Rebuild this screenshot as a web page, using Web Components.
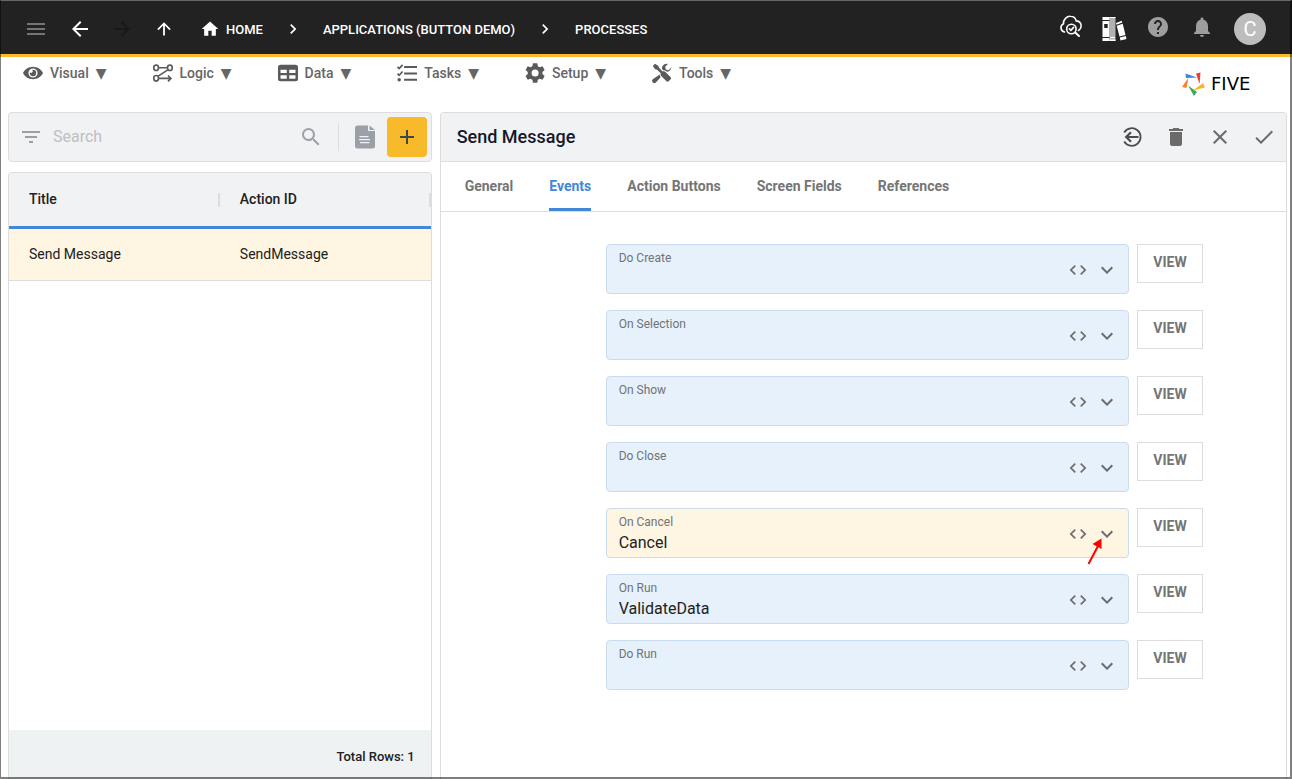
<!DOCTYPE html>
<html lang="en">
<head>
<meta charset="utf-8">
<meta name="viewport" content="width=device-width, initial-scale=1">
<title>Five - Processes</title>
<style>
  html, body { height: 100%; margin: 0; }
  body { font-family: Roboto, "Liberation Sans", sans-serif; background: #fff; color: #212121; overflow: hidden; }
</style>
</head>
<body>
<five-app>
  <top-bar slot="top">
    <nav-crumb icon="home">HOME</nav-crumb>
    <nav-crumb>APPLICATIONS (BUTTON DEMO)</nav-crumb>
    <nav-crumb last>PROCESSES</nav-crumb>
  </top-bar>
  <menu-bar slot="menu">
    <menu-entry icon="eye">Visual</menu-entry>
    <menu-entry icon="logic">Logic</menu-entry>
    <menu-entry icon="grid">Data</menu-entry>
    <menu-entry icon="tasks">Tasks</menu-entry>
    <menu-entry icon="gear">Setup</menu-entry>
    <menu-entry icon="tools">Tools</menu-entry>
  </menu-bar>
  <record-list slot="list"></record-list>
  <record-form slot="form" heading="Send Message">
    <form-tab slot="tabs">General</form-tab>
    <form-tab slot="tabs" selected>Events</form-tab>
    <form-tab slot="tabs">Action Buttons</form-tab>
    <form-tab slot="tabs">Screen Fields</form-tab>
    <form-tab slot="tabs">References</form-tab>
    <event-field label="Do Create"></event-field>
    <event-field label="On Selection"></event-field>
    <event-field label="On Show"></event-field>
    <event-field label="Do Close"></event-field>
    <event-field label="On Cancel" value="Cancel" active><pointer-arrow></pointer-arrow></event-field>
    <event-field label="On Run" value="ValidateData"></event-field>
    <event-field label="Do Run"></event-field>
  </record-form>
</five-app>

<script>
const ICONS = {
  menu: '<path d="M3 18h18v-2H3v2zm0-5h18v-2H3v2zm0-7v2h18V6H3z"/>',
  back: '<path d="M20 11H7.83l5.59-5.59L12 4l-8 8 8 8 1.41-1.41L7.83 13H20v-2z"/>',
  forward: '<path d="M12 4l-1.41 1.41L16.17 11H4v2h12.17l-5.58 5.59L12 20l8-8z"/>',
  up: '<path d="M5.3 12l1.2 1.2 4.6-4.6V18.5h1.8V8.600l4.600 4.600 1.200-1.200L12 5.300z"/>',
  home: '<path d="M10 20v-6h4v6h5v-8h3L12 3 2 12h3v8z"/>',
  right: '<path d="M10 6L8.590 7.410 13.170 12l-4.580 4.590L10 18l6-6z"/>',
  eye: '<path fill-rule="evenodd" d="M12 4.500C6.500 4.500 2 7.900 0 12c2 4.100 6.500 7.500 12 7.500s10-3.400 12-7.500c-2-4.100-6.500-7.500-12-7.500zm0 13a5.500 5.500 0 1 1 0-11 5.500 5.500 0 0 1 0 11z"/><path d="M12 8.200a3.800 3.800 0 1 1-3.700 3 2 2 0 0 0 2.800-2.900z"/>',
  logic: '<g fill="none" stroke="currentColor" stroke-width="2"><rect x="1" y="2.500" width="5.500" height="6.500" rx="2.700"/><rect x="17.500" y="2.500" width="5.500" height="6.500" rx="2.700"/><rect x="1" y="15" width="5.500" height="6.500" rx="2.700"/><path d="M6.500 5.700h11M18.300 8L5.700 16M6.500 18.500h15M18 15l3.500 3.500L18 22"/></g>',
  grid: '<path fill-rule="evenodd" d="M3 2h18a3 3 0 0 1 3 3v14a3 3 0 0 1-3 3H3a3 3 0 0 1-3-3V5a3 3 0 0 1 3-3zm0 6v4h7.500V8zm10.500 0v4H21V8zM3 14.700V19h7.500v-4.300zm10.500 0V19H21v-4.300z"/>',
  tasks: '<path d="M8.500 3.500H24v2.400H8.500zM8.500 11.500H24v2.400H8.500zM8.500 19H24v2.400H8.500z"/><circle cx="2.600" cy="20" r="2.100"/><path fill="none" stroke="currentColor" stroke-width="2" d="M.6 4.700l2 2L6.700 2.200M.6 12.700l2 2 4.100-4.500"/>',
  gear: '<path fill-rule="evenodd" d="M9.600 0h4.800l.7 3.300 2.100 1.200 3.200-1.100 2.400 4.200-2.500 2.200v2.400l2.500 2.200-2.400 4.200-3.200-1.100-2.100 1.200-.7 3.300H9.600l-.7-3.300-2.100-1.200-3.200 1.100-2.400-4.200 2.500-2.200V9.800L1.200 7.600l2.400-4.200 3.200 1.100 2.100-1.200zM12 7a4 4 0 1 0 0 8 4 4 0 0 0 0-8z" transform="translate(-.6 .4) scale(1.060)"/>',
  tools: '<path d="M3.500 1L1 3.500l2.800 4 2.400.5 4.300 4.300c-.5 1.200-.2 2.500.6 3.400l6.300 6.300c.7.700 1.800.7 2.500 0l2.500-2.500c.7-.7.700-1.800 0-2.500L16.100 10.700c-.9-.9-2.300-1.100-3.400-.6L8.400 5.800 7.800 3.600z"/><path d="M23.300 5.200l-3.400 3.400-3.300-.8-.8-3.300L19.200 1.100c-2.400-.6-4.900.2-6.300 2.200-.8 1.200-1.100 2.500-.9 3.800l1.500 1.500c1.300-.2 2.600.2 3.600 1.200l.8.8c1.200-.1 2.500-.6 3.500-1.600 1.500-1.500 2-3.700 1.900-3.800zM9.300 13.700L.9 19.600a2.600 2.600 0 0 0 3.700 3.700l5.800-6.200c-.8-.9-1.200-2.200-1.100-3.400z"/>',
  cloud: '<g fill="none" stroke="currentColor" stroke-width="1.600" stroke-linecap="round" transform="translate(1 -.5)"><path d="M5.500 17.500A4.400 4.400 0 0 1 4.500 9.200 C4 5 8 1.500 11.500 1.800c3 .1 5 2 5.800 4.600 3.600.1 5.200 3 4.800 5.600-.3 2.200-1.300 3.200-2.600 4"/><circle cx="12.400" cy="14.500" r="4.700"/><path stroke-width="2" d="M16.200 18l3.800 3.500"/><path d="M10.300 14.300l1.600 1.600 2.700-3"/></g>',
  books: '<g transform="translate(.5 2)"><path fill-rule="evenodd" d="M0 0h7v24H0zM1.700 7v4h3.500V7zM0 3v1h7V3zM0 20v1h7v-1z"/><path opacity=".65" d="M7 0h6v24H7z"/><path d="M7.500 20h5v1h-5zM7 22.500h6V24H7zM7 0h6v1H7zM13.500 6l5.700-2.200.6 1.700-5.900 2.200zM14.200 8.700l6-2 2.800 11.200-6 1.500zM17.300 20.500l6-1.500.7 2.900-6 1.500z"/></g>',
  help: '<path d="M12 2C6.480 2 2 6.480 2 12s4.480 10 10 10 10-4.480 10-10S17.520 2 12 2zm1 17h-2v-2h2v2zm2.070-7.750l-.9.920C13.450 12.900 13 13.500 13 15h-2v-.5c0-1.100.45-2.100 1.170-2.830l1.240-1.260c.37-.36.590-.860.590-1.410 0-1.100-.9-2-2-2s-2 .9-2 2H8c0-2.210 1.790-4 4-4s4 1.790 4 4c0 .880-.360 1.680-.930 2.250z"/>',
  bell: '<path d="M12 22c1.100 0 2-.9 2-2h-4c0 1.100.9 2 2 2zm6-6v-5c0-3.070-1.640-5.640-4.500-6.320V4c0-.830-.670-1.500-1.500-1.500s-1.500.67-1.500 1.500v.68C7.630 5.360 6 7.920 6 11v5l-2 2v1h16v-1l-2-2z"/>',
  filter: '<path d="M10 18h4v-2h-4v2zM3 6v2h18V6H3zm3 7h12v-2H6v2z"/>',
  search: '<path d="M15.500 14h-.79l-.28-.27A6.471 6.471 0 0 0 16 9.500 6.500 6.500 0 1 0 9.500 16c1.610 0 3.090-.59 4.230-1.570l.27.28v.79l5 4.990L20.490 19l-4.990-5zm-6 0C7.010 14 5 11.990 5 9.500S7.010 5 9.500 5 14 7.010 14 9.500 11.990 14 9.500 14z"/>',
  doc: '<path fill-rule="evenodd" d="M4.500 .5H15V6h7v15a2.500 2.500 0 0 1-2.500 2.500h-15A2.500 2.500 0 0 1 2 21V3A2.500 2.500 0 0 1 4.500 .5zM6.500 11v1.200h9V11zm-.5 3v1.200h11V14zm1 3v1.200h9.500V17z"/><path d="M16.500.5L22 5h-5.500z"/>',
  plus: '<path d="M19 13h-6v6h-2v-6H5v-2h6V5h2v6h6v2z"/>',
  exit: '<g fill="none" stroke="currentColor" stroke-width="1.800"><path d="M4.200 7.500a8.800 8.800 0 1 1 0 9"/><path stroke-width="2.200" d="M18.500 12H6.500M11 7.300L6.200 12l4.800 4.700"/></g>',
  trash: '<path d="M6 19c0 1.100.9 2 2 2h8c1.100 0 2-.9 2-2V7H6v12zM19 4h-3.500l-1-1h-5l-1 1H5v2h14V4z"/>',
  close: '<path d="M19 6.410L17.590 5 12 10.590 6.410 5 5 6.410 10.590 12 5 17.590 6.410 19 12 13.410 17.590 19 19 17.590 13.410 12z"/>',
  check: '<path d="M9 16.170L4.830 12l-1.420 1.410L9 19 21 7l-1.410-1.410z"/>',
  code: '<path d="M9.400 16.600L4.800 12l4.600-4.600L8 6l-6 6 6 6 1.400-1.400zm5.200 0l4.600-4.600-4.600-4.600L16 6l6 6-6 6-1.400-1.400z"/>',
  down: '<path d="M16.590 8.590L12 13.170 7.410 8.590 6 10l6 6 6-6z"/>'
};

/* Shared by every element that holds clickable icons */
const RESET = `
  * { box-sizing: border-box; }
  button { font: inherit; color: inherit; background: none; border: 0; padding: 0; margin: 0; cursor: pointer; display: flex; align-items: center; justify-content: center; }
  a { color: inherit; text-decoration: none; }
`;

function define(name, render) {
  customElements.define(name, class extends HTMLElement {
    connectedCallback() {
      if (this.shadowRoot) return;
      this.attachShadow({ mode: 'open' }).innerHTML = render(this);
    }
  });
}

define('five-icon', el => `
  <style>
    :host { display: block; flex: none; width: var(--size, 24px); height: var(--size, 24px); }
    svg { display: block; width: 100%; height: 100%; overflow: visible; }
  </style>
  <svg viewBox="0 0 24 24" fill="currentColor" aria-hidden="true">${ICONS[el.getAttribute('name')]}</svg>`);

define('five-app', () => `
  <style>
    :host { box-sizing: border-box; display: flex; flex-direction: column; height: 100vh; }
    main { flex: 1; min-height: 0; display: grid; grid-template-columns: 1fr 2fr; gap: 8px; padding: 0 5px 0 8px; }
    .frame { position: fixed; inset: 0; pointer-events: none; border: solid rgba(0,0,0,.5); border-width: 1px 2px 2px 1px; border-top-color: #666; }
  </style>
  <slot name="top"></slot>
  <slot name="menu"></slot>
  <main><slot name="list"></slot><slot name="form"></slot></main>
  <div class="frame"></div>`);

define('top-bar', () => `
  <style>${RESET}
    :host { box-sizing: border-box; flex: none; display: flex; align-items: center; height: 57px; padding: 4px 26px 0 24px; background: #222; color: #fff; border-bottom: 3px solid #f8b92a; }
    .nav { display: flex; align-items: center; gap: 18px; }
    .nav button:first-child { color: #757575; margin-right: 2px; }
    .nav button:nth-child(3) { color: #181818; }
    .crumbs { display: flex; align-items: center; margin-left: 24px; }
    .tools { margin-left: auto; display: flex; align-items: center; gap: 20px; padding-bottom: 4px; color: #9e9e9e; }
    .tools .white { color: #fff; }
    .avatar { width: 32px; height: 32px; margin-left: 20px; border-radius: 50%; background: #bdbdbd; color: #fff; font-size: 20px; line-height: 32px; }
  </style>
  <div class="nav">
    <button aria-label="Menu"><five-icon name="menu"></five-icon></button>
    <button aria-label="Back"><five-icon name="back"></five-icon></button>
    <button aria-label="Forward"><five-icon name="forward"></five-icon></button>
    <button aria-label="Up"><five-icon name="up"></five-icon></button>
  </div>
  <nav class="crumbs" aria-label="Breadcrumb"><slot></slot></nav>
  <div class="tools">
    <button class="white" aria-label="Inspect"><five-icon name="cloud"></five-icon></button>
    <button class="white" aria-label="Library"><five-icon name="books"></five-icon></button>
    <button aria-label="Help"><five-icon name="help"></five-icon></button>
    <button aria-label="Notifications"><five-icon name="bell"></five-icon></button>
  </div>
  <button class="avatar" aria-label="Account">C</button>`);

define('nav-crumb', el => `
  <style>${RESET}
    :host { display: flex; align-items: center; --size: 20px; }
    a { display: flex; align-items: center; gap: 6px; font-size: 13px; line-height: 20px; font-weight: 500; white-space: nowrap; }
    span { padding-top: 2px; }
    .sep { margin: 0 20px; }
  </style>
  <a href="#">${el.hasAttribute('icon') ? `<five-icon name="${el.getAttribute('icon')}"></five-icon>` : ''}<span><slot></slot></span></a>
  ${el.hasAttribute('last') ? '' : '<five-icon class="sep" name="right"></five-icon>'}`);

define('menu-bar', () => `
  <style>${RESET}
    :host { box-sizing: border-box; flex: none; display: flex; justify-content: space-between; align-items: flex-start; height: 55px; padding: 6px 22px 0 23px; }
    nav { display: flex; gap: 46px; }
    .logo { display: flex; align-items: center; gap: 6px; padding-top: 9px; color: #000; font: 18px/24px "DejaVu Sans", sans-serif; width: 88px; }
    svg { display: block; width: 23px; height: 24px; }
  </style>
  <nav aria-label="Main"><slot></slot></nav>
  <a class="logo" href="#">
    <svg viewBox="0 0 23 24" aria-hidden="true">
      <path fill="#4285d8" d="M3.500 1.500L15 5.500 4 6z"/>
      <path fill="#ea3d38" d="M14 1.500L18.500 .500 17.500 12z"/>
      <path fill="#f8b42a" d="M11 18.500L21 11l2 4.500z"/>
      <path fill="#3faa58" d="M6 13.500L15 20l-3 4z"/>
      <path fill="#f5822e" d="M6.500 5.500L4.500 16 0 15z"/>
    </svg>FIVE
  </a>`);

define('menu-entry', el => `
  <style>${RESET}
    :host { display: block; --size: 20px; color: #5a5a5a; }
    button { gap: 7px; font-size: 14px; line-height: 20px; font-weight: 500; white-space: nowrap; }
    .text { display: flex; gap: 7px; color: #666; }
    .tri { font-family: "DejaVu Sans", sans-serif; font-weight: 400; }
  </style>
  <button aria-haspopup="menu"><five-icon name="${el.getAttribute('icon')}"></five-icon><span class="text"><slot></slot><span class="tri">▼</span></span></button>`);

define('record-list', () => `
  <style>${RESET}
    :host { display: flex; flex-direction: column; gap: 10px; min-height: 0; min-width: 0; }
    .search { flex: none; display: flex; align-items: center; height: 50px; padding: 0 4px 0 10px; background: #f1f2f4; border: 1px solid #ddd; border-radius: 4px; color: #9aa0a6; }
    input { flex: 1; min-width: 0; margin: 0 10px; padding: 0; border: 0; outline: 0; background: none; font: 16px/24px Roboto, "Liberation Sans", sans-serif; color: #212121; }
    input::placeholder { color: #bdbfc2; opacity: 1; }
    .rule { width: 1px; height: 28px; margin: 0 14px 0 15px; background: #ddd; }
    .doc { margin-right: 10px; }
    .add { width: 40px; height: 40px; border-radius: 4px; background: #f8b92a; color: #444; }
    .panel { flex: 1; min-height: 0; display: flex; flex-direction: column; border: 1px solid #ddd; border-bottom: 0; border-radius: 4px 4px 0 0; overflow: hidden; }
    table { width: 100%; table-layout: fixed; border-collapse: separate; border-spacing: 0; font-size: 14px; line-height: 20px; text-align: left; }
    th, td { padding: 0 20px 2px; }
    th { position: relative; height: 56px; font-weight: 500; background: #f1f2f4; border-bottom: 3px solid #4287d8; }
    th::after { content: ""; position: absolute; right: 0; top: 20px; width: 2px; height: 14px; background: #ddd; }
    td { height: 52px; background: #fff5e3; border-bottom: 1px solid #ddd; }
    footer { flex: none; margin-top: auto; height: 49px; padding: 17px 16px 0; background: #eef2f3; font-size: 13px; line-height: 20px; font-weight: 500; text-align: right; }
  </style>
  <div class="search">
    <button aria-label="Filter"><five-icon name="filter"></five-icon></button>
    <input type="text" placeholder="Search" aria-label="Search">
    <button aria-label="Find"><five-icon name="search"></five-icon></button>
    <span class="rule"></span>
    <button class="doc" aria-label="Report"><five-icon name="doc"></five-icon></button>
    <button class="add" aria-label="Add"><five-icon name="plus"></five-icon></button>
  </div>
  <div class="panel">
    <table>
      <thead><tr><th>Title</th><th>Action ID</th></tr></thead>
      <tbody><tr><td>Send Message</td><td>SendMessage</td></tr></tbody>
    </table>
    <footer>Total Rows: 1</footer>
  </div>`);

define('record-form', el => `
  <style>${RESET}
    :host { box-sizing: border-box; display: flex; flex-direction: column; min-height: 0; min-width: 0; border: 1px solid #ddd; border-bottom: 0; border-radius: 4px 4px 0 0; overflow: hidden; }
    header { flex: none; display: flex; align-items: center; justify-content: space-between; height: 49px; padding: 0 10px 0 16px; background: #f1f2f4; border-bottom: 1px solid #ddd; }
    h1 { margin: 0; font-size: 18px; line-height: 24px; font-weight: 500; color: #14192b; }
    .actions { display: flex; gap: 20px; color: #6b6b6b; }
    .actions button:first-child { color: #4d4d4d; }
    .tabs { flex: none; display: flex; gap: 36px; height: 50px; padding: 0 24px; border-bottom: 1px solid #ddd; }
    .fields { display: flex; flex-direction: column; gap: 16px; padding: 32px 83px 0 165px; }
  </style>
  <header>
    <h1>${el.getAttribute('heading')}</h1>
    <div class="actions">
      <button aria-label="Exit"><five-icon name="exit"></five-icon></button>
      <button aria-label="Delete"><five-icon name="trash"></five-icon></button>
      <button aria-label="Cancel"><five-icon name="close"></five-icon></button>
      <button aria-label="Save"><five-icon name="check"></five-icon></button>
    </div>
  </header>
  <div class="tabs" role="tablist"><slot name="tabs"></slot></div>
  <div class="fields"><slot></slot></div>`);

define('form-tab', el => `
  <style>${RESET}
    :host { display: flex; color: #757575; }
    :host([selected]) { color: #4287d8; }
    button { height: 49px; font-size: 14px; line-height: 20px; font-weight: 700; white-space: nowrap; border-bottom: 3px solid transparent; padding-top: 1px; }
    :host([selected]) button { border-bottom-color: #4287d8; }
  </style>
  <button role="tab" aria-selected="${el.hasAttribute('selected')}"><slot></slot></button>`);

define('event-field', el => `
  <style>${RESET}
    :host { display: flex; align-items: flex-start; gap: 8px; }
    .box { position: relative; flex: 1; min-width: 0; display: flex; align-items: center; height: 50px; padding: 2px 9px 0 12px; background: #e7f1fc; border: 1px solid #c9dcee; border-radius: 4px; color: #6b6b6b; }
    :host([active]) .box { background: #fff5e3; }
    .text { flex: 1; min-width: 0; display: flex; flex-direction: column; gap: 4px; }
    label { font-size: 12px; line-height: 14px; color: #6f7377; }
    input { width: 100%; height: 20px; padding: 0; border: 0; outline: 0; background: none; font: 16px/20px Roboto, "Liberation Sans", sans-serif; color: #212121; }
    .code { --size: 20px; margin-right: 7px; }
    .view { width: 66px; height: 39px; padding-bottom: 4px; border: 1px solid #ddd; font-size: 14px; line-height: 20px; font-weight: 700; color: #757575; }
  </style>
  <div class="box">
    <div class="text"><label for="value">${el.getAttribute('label')}</label><input id="value" type="text" value="${el.getAttribute('value') || ''}"></div>
    <button class="code" aria-label="Edit code"><five-icon name="code"></five-icon></button>
    <button aria-label="Open list"><five-icon name="down"></five-icon></button>
    <slot></slot>
  </div>
  <button class="view">VIEW</button>`);

define('pointer-arrow', () => `
  <style>
    :host { position: absolute; right: 25px; top: 28px; width: 16px; height: 28px; pointer-events: none; }
    svg { display: block; }
  </style>
  <svg width="16" height="28" viewBox="0 0 16 28" aria-hidden="true"><path d="M1.500 27L11 9" stroke="#f00" stroke-width="2"/><path fill="#f00" d="M14.500 1.500L5.500 7l9 5z"/></svg>`);
</script>
</body>
</html>
